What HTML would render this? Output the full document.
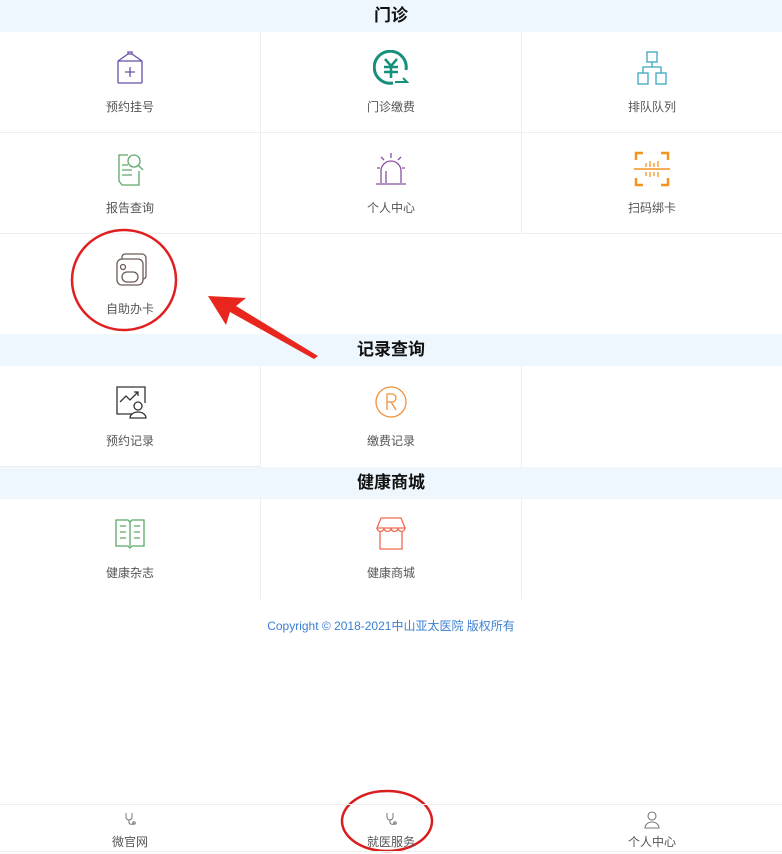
<!DOCTYPE html>
<html><head><meta charset="utf-8"><style>
*{margin:0;padding:0;box-sizing:border-box}
body{width:782px;height:854px;background:#fff;font-family:"Liberation Sans","Noto Sans CJK SC",sans-serif;position:relative;overflow:hidden}
.hd{position:absolute;left:0;width:782px;height:32px;background:#eef7fd;text-align:center;font-size:17px;font-weight:bold;line-height:32px;color:#111}
.cell{position:absolute;width:261px;height:101px;border-right:1px solid #eee;border-bottom:1px solid #eee;text-align:center}
.cell svg{position:absolute;left:112px;top:18px;width:36px;height:36px}
.cell span{position:absolute;left:0;right:0;top:66px;font-size:12px;color:#555}
.nav{position:absolute;top:804px;left:0;width:782px;height:48px;border-top:1px solid #eee;border-bottom:1px solid #eee}
.nav div{position:absolute;width:260px;text-align:center;font-size:12px;color:#555;top:28px}
</style></head><body>
<div class="hd" style="top:0">门诊</div>
<div class="hd" style="top:334px">记录查询</div>
<div class="hd" style="top:467px">健康商城</div>

<div class="cell" style="left:0;top:32px"><svg viewBox="0 0 36 36" fill="none" stroke="#6a4fa8" stroke-width="1.3"><rect x="6" y="11" width="24" height="22" rx="1"/><path d="M6 11l10-7h4l10 7M16 4v-2h4v2"/><path d="M18 17v10M13 22h10"/></svg><span>预约挂号</span></div>
<div class="cell" style="left:261px;top:32px"><svg viewBox="0 0 36 36" fill="none" stroke="#16907c" stroke-width="3"><path d="M20 33A16 16 0 1 1 33 20"/><path d="M12 9l6 7 6-7M11 17h14M11 22h14M18 16v12" stroke-width="2.5"/><path d="M22 32h12l-4-4" stroke-width="2"/></svg><span>门诊缴费</span></div>
<div class="cell" style="left:522px;top:32px"><svg viewBox="0 0 36 36" fill="none" stroke="#3aa8c0" stroke-width="1.3"><rect x="13" y="2" width="10" height="10"/><rect x="4" y="23" width="10" height="11"/><rect x="22" y="23" width="10" height="11"/><path d="M18 12v5M9 23v-6h18v6"/></svg><span>排队队列</span></div>

<div class="cell" style="left:0;top:133px"><svg viewBox="0 0 36 36" fill="none" stroke="#5fa86a" stroke-width="1.3"><path d="M16 4H7v26l3 4h17V20"/><circle cx="22" cy="10" r="6"/><path d="M26 14l5 5M10 14h6M10 19h10M10 24h10"/></svg><span>报告查询</span></div>
<div class="cell" style="left:261px;top:133px"><svg viewBox="0 0 36 36" fill="none" stroke="#8a4fa0" stroke-width="1.3"><path d="M8 32V20a10 10 0 0 1 20 0v12M13 32V20M3 33h30" /><path d="M18 2v5M8 6l3 3M28 6l-3 3M4 17h3M29 17h3"/></svg><span>个人中心</span></div>
<div class="cell" style="left:522px;top:133px"><svg viewBox="0 0 36 36" fill="none" stroke="#f39420" stroke-width="2.5"><path d="M2 9V2h7M27 2h7v7M2 27v7h7M27 34h7v-7"/><path d="M0 18h36" stroke-width="1.5"/><path d="M12 12v4M16 10v6M20 12v4M24 10v6M12 21v4M16 21v5M20 21v4M24 21v5" stroke-width="1.3"/></svg><span>扫码绑卡</span></div>

<div class="cell" style="left:0;top:234px;height:100px;border-bottom:none"><svg viewBox="0 0 36 36" fill="none" stroke="#6d5a55" stroke-width="1.3"><rect x="5" y="7" width="26" height="26" rx="5"/><path d="M10 7V5a3 3 0 0 1 3-3h17a4 4 0 0 1 4 4v18a3 3 0 0 1-3 3"/><circle cx="11" cy="15" r="2.5"/><rect x="10" y="20" width="16" height="10" rx="5"/></svg><span>自助办卡</span></div>

<div class="cell" style="left:0;top:366px"><svg viewBox="0 0 36 36" fill="none" stroke="#333" stroke-width="1.3"><path d="M20 30H5V3h28v16"/><path d="M8 18l6-6 4 4 8-8M22 8h4v4"/><circle cx="26" cy="22" r="4"/><path d="M18 34a8 6 0 0 1 16 0z"/></svg><span>预约记录</span></div>
<div class="cell" style="left:261px;top:366px;border-bottom:none"><svg viewBox="0 0 36 36" fill="none" stroke="#f0923c" stroke-width="1.3"><circle cx="18" cy="18" r="15"/><path d="M14 26V10h5a4 4 0 0 1 0 8h-5M18 18l5 8"/></svg><span>缴费记录</span></div>

<div class="cell" style="left:0;top:498px;border-bottom:none"><svg viewBox="0 0 36 36" fill="none" stroke="#5aa866" stroke-width="1.3"><path d="M4 4h12l2 2 2-2h12v26H20l-2 2-2-2H4z"/><path d="M18 6v24M8 10h6M8 16h6M8 22h6M22 10h6M22 16h6M22 22h6"/></svg><span>健康杂志</span></div>
<div class="cell" style="left:261px;top:498px;border-bottom:none"><svg viewBox="0 0 36 36" fill="none" stroke="#f06a50" stroke-width="1.3"><path d="M8 2h20l4 10H4z"/><path d="M4 12a3.5 3.5 0 0 0 7 0a3.5 3.5 0 0 0 7 0a3.5 3.5 0 0 0 7 0a3.5 3.5 0 0 0 7 0"/><path d="M7 16v17h22V16"/></svg><span>健康商城</span></div>

<div style="position:absolute;top:617px;left:0;width:782px;text-align:center;font-size:12px;color:#3b7fd0">Copyright © 2018-2021中山亚太医院 版权所有</div>

<svg style="position:absolute;left:0;top:0" width="782" height="854">
<ellipse cx="124" cy="280" rx="52" ry="50" fill="none" stroke="#e02020" stroke-width="2.5"/>
<polygon points="208,296 246,298 236,306 318,356 314,359 230,312 226,325" fill="#e8261e"/>
<ellipse cx="387" cy="821" rx="45" ry="30" fill="none" stroke="#d81e1e" stroke-width="2.5"/>
</svg>

<div class="nav">
<svg style="position:absolute;left:123px;top:7px" width="14" height="16" fill="none" stroke="#777" stroke-width="1"><path d="M3 1v4a3 3 0 0 0 6 0V1M6 8v3a3 3 0 0 0 5 0"/><circle cx="11" cy="11" r="1.3"/></svg>
<svg style="position:absolute;left:384px;top:7px" width="14" height="16" fill="none" stroke="#777" stroke-width="1"><path d="M3 1v4a3 3 0 0 0 6 0V1M6 8v3a3 3 0 0 0 5 0"/><circle cx="11" cy="11" r="1.3"/></svg>
<svg style="position:absolute;left:644px;top:6px" width="16" height="18" fill="none" stroke="#777" stroke-width="1.1"><circle cx="8" cy="5" r="4"/><path d="M1 17a7 6 0 0 1 14 0z"/></svg>
<div style="left:0">微官网</div><div style="left:261px">就医服务</div><div style="left:522px">个人中心</div>
</div>
</body></html>
